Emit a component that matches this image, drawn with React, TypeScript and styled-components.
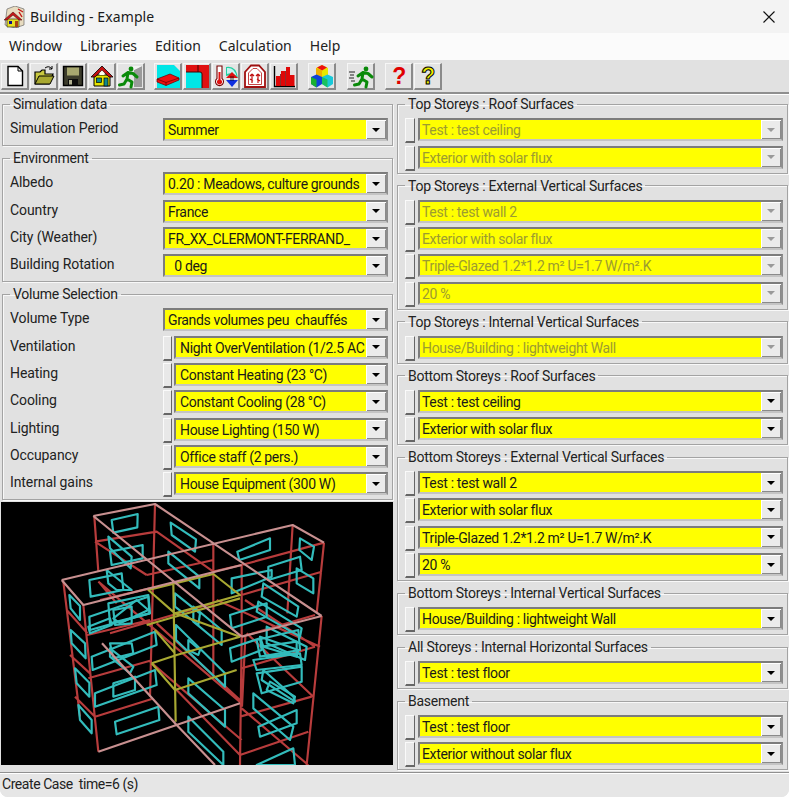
import React from "react";
import styled, { createGlobalStyle } from "styled-components";

const Global = createGlobalStyle`
  html, body { margin: 0; padding: 0; background: #fff; }
  #root { width: 789px; height: 797px; overflow: hidden; }
  * { box-sizing: border-box; }
`;
const Win = styled.div`
  width: 789px; height: 797px; display: flex; flex-direction: column; background: #e1e1e1;
  font-family: Roboto, "Liberation Sans", Arial, sans-serif; color: #111; font-size: 14px; letter-spacing: -0.34px;
  border-radius: 0 0 8px 8px; overflow: hidden;
`;
const TitleBar = styled.div`
  height: 33px; flex: none; background: #f3f3f3; display: flex; align-items: center; padding: 0 14px 0 4px; gap: 5px;
`;
const Title = styled.div`
  flex: 1; font-family: "Noto Sans", sans-serif; font-size: 14px; color: #1a1a1a; letter-spacing: 0.1px;
`;
const MenuBar = styled.div`
  height: 27px; flex: none; background: #fbfbfb; display: flex; align-items: center; padding: 0 0 2px 9px; gap: 18px;
  font-family: "Noto Sans", sans-serif; font-size: 14px; color: #222; letter-spacing: 0;
`;
const Toolbar = styled.div`
  height: 34px; flex: none; display: flex; align-items: flex-start; padding: 3px 0 0 1px;
  border-bottom: 2px solid #8f8f8f; box-shadow: 0 1px 0 #fff;
`;
const ToolGroup = styled.div<{ $left: number }>`
  display: flex; gap: 1px; margin-left: ${(p) => p.$left}px;
`;
const ToolBtn = styled.div`
  width: 28px; height: 27px; display: flex; align-items: center; justify-content: center; background: #e4e4e4;
  border-top: 1px solid #f6f6f6; border-left: 1px solid #f6f6f6; border-right: 2px solid #8a8a8a; border-bottom: 2px solid #8a8a8a;
`;
const Main = styled.div`
  flex: 1; min-height: 0; display: grid; grid-template-columns: 391px 391px; column-gap: 4px; padding: 3.4px 0 0 2px; align-items: start;
`;
const Column = styled.div`
  display: flex; flex-direction: column; gap: 5px;
`;
const Frame = styled.fieldset`
  margin: 0; min-width: 0; padding: 7px 4px 4px 7px; border: 1px solid #a3a3a3;
  box-shadow: inset 1px 1px 0 #f8f8f8, 1px 1px 0 #f8f8f8; display: flex; flex-direction: column; gap: 4.33px;
`;
const Legend = styled.legend`
  padding: 0 3px; height: 14px; line-height: 14px; font-size: 14px; color: #222; letter-spacing: -0.24px;
`;
const Row = styled.div`
  height: 23px; display: flex; align-items: flex-start;
`;
const Label = styled.div`
  flex: 0 0 153px; height: 18px; line-height: 18px; margin-top: 1px; color: #222; letter-spacing: -0.1px;
`;
const Side = styled.div<{ $narrow?: boolean }>`
  flex: 0 0 ${(p) => (p.$narrow ? 9 : 10)}px; height: 25px; margin-right: ${(p) => (p.$narrow ? 2 : 3)}px; background: #e8e8e8;
  border-top: 1px solid #fafafa; border-left: 1px solid #fafafa; border-right: 1px solid #666; border-bottom: 2px solid #666;
`;
const ComboBox = styled.div<{ $off?: boolean }>`
  flex: 1; min-width: 0; height: 23px; display: flex; background: #ffff00;
  border-style: solid; border-width: 2px; border-color: #7c7c7c #8e8e8e #c4c4c4 #7c7c7c;
  color: ${(p) => (p.$off ? "#9c9c30" : "#1a1a1a")};
`;
const ComboText = styled.div<{ $pad: number }>`
  flex: 1; min-width: 0; overflow: hidden; white-space: pre; padding-left: ${(p) => p.$pad}px; line-height: 20.5px; font-size: 14px;
`;
const ArrowBtn = styled.div`
  flex: 0 0 20px; display: flex; align-items: center; justify-content: center; background: #ebebeb;
  box-shadow: inset 1px 1px 0 #fff, inset -1px -1px 0 #8a8a8a;
`;
const Arrow = styled.div<{ $off?: boolean }>`
  width: 0; height: 0; border-left: 4px solid transparent; border-right: 4px solid transparent;
  border-top: 4px solid ${(p) => (p.$off ? "#9a9a9a" : "#000")};
`;
const Scene = styled.svg`
  display: block; width: 392px; height: 263px; margin-left: -1px; margin-top: -3px; background: #000; filter: blur(0.35px);
`;
const StatusBar = styled.div`
  height: 25px; flex: none; margin-top: auto; border-top: 1px solid #909090; box-shadow: inset 0 1px 0 #fff;
  padding: 2px 0 0 2px; line-height: 19px; white-space: pre; color: #222; background: #e6e6e6; letter-spacing: -0.44px;
`;
const CloseIcon = styled.svg`
  flex: none;
`;

const Combo = ({ text, off, side, narrow }: { text: string; off?: boolean; side?: boolean; narrow?: boolean }) => (
  <>
    {side && <Side $narrow={narrow} />}
    <ComboBox $off={off}>
      <ComboText $pad={narrow ? 4 : side ? 2 : 3}>{text}</ComboText>
      <ArrowBtn><Arrow $off={off} /></ArrowBtn>
    </ComboBox>
  </>
);

const Group = ({ title, rows, off }: { title: string; rows: string[]; off?: boolean }) => (
  <Frame>
    <Legend>{title}</Legend>
    {rows.map((r, i) => (
      <Row key={i}><Combo text={r} off={off} side /></Row>
    ))}
  </Frame>
);

const LabeledGroup = ({ title, rows }: { title: string; rows: [string, string, boolean?][] }) => (
  <Frame>
    <Legend>{title}</Legend>
    {rows.map(([l, v, s], i) => (
      <Row key={i}><Label>{l}</Label><Combo text={v} side={!!s} narrow={!!s} /></Row>
    ))}
  </Frame>
);

const I = ({ children }: { children: React.ReactNode }) => (
  <svg width="24" height="24" viewBox="0 0 24 24" overflow="visible">{children}</svg>
);

const Runner = ({ c = "#0a8a0a" }: { c?: string }) => (
  <g fill="none" stroke={c} strokeWidth="3" strokeLinecap="round" strokeLinejoin="round">
    <circle cx="14" cy="4" r="2.4" fill={c} stroke="none" />
    <path d="M6 11L11 7.5L16 8.5L20 12M11 7.5L10 14L15 17L14 22M10 14L7 19L2.5 20" />
  </g>
);

const icons: React.ReactNode[] = [
  <I key="n"><path d="M5 2.5H15L19.5 7V21.5H5Z" fill="#fff" stroke="#000" strokeWidth="1.4" /><path d="M15 2.5V7H19.5" fill="none" stroke="#000" /></I>,
  <I key="o"><path d="M3 8H8L10 6H13V10H21L17 20H3Z" fill="#c8c840" stroke="#000" strokeWidth="1.2" /><path d="M7 12H22L18 20H3Z" fill="#a8a830" stroke="#000" /><path d="M13 4Q17 1 20 5M20 5V2M20 5H17" fill="none" stroke="#000" /></I>,
  <I key="s"><path d="M2.5 2.5H21.5V21.5H2.5Z" fill="#3c3c2c" stroke="#000" strokeWidth="1.4" /><rect x="6" y="3.5" width="12" height="8" fill="#a8a870" /><rect x="7" y="15" width="10" height="6.5" fill="#0c0c0c" /><rect x="8" y="16" width="3" height="4.5" fill="#b0b090" /></I>,
  <I key="h"><path d="M4 11H20V22H4Z" fill="#e6e600" stroke="#000" /><path d="M1 13L12 2L23 13H19L12 6.5L5 13Z" fill="#c41010" stroke="#000" strokeWidth="0.8" /><path d="M9.5 9L12 6.5L14.5 9V11H9.5Z" fill="#ffe" /><rect x="6.5" y="14" width="5" height="4.5" fill="#108a8a" stroke="#000" strokeWidth="0.7" /><rect x="14" y="14" width="4" height="8" fill="#108a8a" stroke="#000" strokeWidth="0.7" /></I>,
  <I key="e"><path d="M15 6L23 2V23H15Z" fill="#9a9a9a" /><path d="M15 6L23 2H14Z" fill="#f4f4f4" /><circle cx="18" cy="13" r="0.8" fill="#222" /><g transform="translate(-2 1)"><Runner /></g></I>,
  <I key="w"><path d="M1 1H18L24 7V24H1Z" fill="#00e6e6" /><path d="M1 15L14 10L23 14V16L10 21.5L1 18Z" fill="#ee1010" stroke="#600" strokeWidth="0.7" /><path d="M1 15L10 18.5L23 14M10 18.5V21.5" fill="none" stroke="#600" strokeWidth="0.7" /></I>,
  <I key="c"><rect x="1" y="1" width="23" height="23" fill="#00e6e6" /><path d="M1 1H24V24H17V10Q17 8 15 8H1Z" fill="#e01010" /><path d="M13 1V8" stroke="#400" strokeWidth="1" /><path d="M1 8H15Q17 8 17 10V24" fill="none" stroke="#400" /></I>,
  <I key="t"><path d="M12 3Q22 1 24 14Q20 10 12 12Z" fill="#20d0a0" /><path d="M13 4Q20 3 22.5 12Q18 8 13 10Z" fill="#c8f0f0" /><path d="M3 2H8V14.5A4 4 0 1 1 3 14.5Z" fill="#fff" stroke="#700" strokeWidth="1.1" /><path d="M4.5 8H6.5V15.5A2.6 2.6 0 1 1 4.5 15.5Z" fill="#e01010" /><path d="M12 14L18 8L24 14Z" fill="#e01010" /><path d="M12 16L18 23L24 16Z" fill="#1030e0" /><path d="M16 12H20V17H16Z" fill="#000" opacity="0.35" /></I>,
  <I key="r"><path d="M2 8L8 1.5H16L22 8V23H2Z" fill="#fff" stroke="#a01010" strokeWidth="1.8" /><path d="M5.5 9L10 4.5H14L18.5 9V20.5H5.5Z" fill="none" stroke="#c03030" strokeWidth="0.9" /><path d="M9 19V10M9 10L7 12M9 10L11 12M15 19V10M15 10L13 12M15 10L17 12M7 15L10 17M14 15L17 17" fill="none" stroke="#c01010" strokeWidth="1.2" /></I>,
  <I key="b"><path d="M2.5 2V22.5H23" fill="none" stroke="#000" strokeWidth="1.4" /><path d="M4 12H8V22H4ZM9 7H13V22H9ZM14 3H18V22H14ZM18 11H22.5V22H18Z" fill="#e00808" /><path d="M8.5 10V22M13.5 7V22" stroke="#700" strokeWidth="0.8" /></I>,
  <I key="q"><path d="M12 1L18 4V11L12 14L6 11V4Z" fill="#e8e800" /><path d="M7 3.5L12 1L17 3.5L12 6.5Z" fill="#ee1010" /><path d="M12 6.5V14L6 11V4Z" fill="#f0b000" /><path d="M1 13L6.5 10.5L12 13V20L6.5 23.5L1 20Z" fill="#1040d8" /><path d="M1 13L6.5 15.5V23.5L1 20Z" fill="#18b030" /><path d="M12 13L17.5 10.5L23 13V20L17.5 23.5L12 20Z" fill="#18c8d8" /><path d="M12 13L17.5 15.5V23.5L12 20Z" fill="#18c060" /></I>,
  <I key="f"><path d="M0 8H6M1 11H5M0 14H5M2 17H6" stroke="#222" strokeWidth="1" /><g transform="translate(3 1)"><Runner /></g></I>,
  <I key="h1"><text x="12" y="20" textAnchor="middle" fontFamily="Liberation Sans" fontWeight="700" fontSize="23" fill="#e00000">?</text></I>,
  <I key="h2"><text x="12" y="20" textAnchor="middle" fontFamily="Liberation Sans" fontWeight="700" fontSize="23" fill="#f0f000" stroke="#000" strokeWidth="1">?</text></I>,
];

const pink = "M280,48L465,12L965,348M280,48L725,410M185,240L878,75L972,128M185,240L250,315L725,195M725,410L965,348M295,755L720,610M306,430L530,675L645,795";
const red = [
  "M283,50L295,215M465,12L450,590M640,130L640,530M878,75L862,340M972,128L950,340M965,348L920,795M725,410L720,795M736,410L726,620M725,195L725,420",
  "M250,315L295,755M190,245L240,650M200,330L262,400M210,465L270,520M225,590L285,650",
  "M285,125L470,95L640,215M285,125L440,225M295,245L725,610M470,370L720,600M450,485L725,720M530,570L720,765M725,625L925,795",
  "M262,405L450,360M265,535L450,482M285,650L455,597M725,505L945,440M640,215L725,195M725,195L972,128M725,285L965,215M725,410L945,345",
  "M720,650L935,590M720,765L925,695M440,225L640,180M300,300L450,265M330,400L640,310M300,250L350,310M650,300L960,440M735,300L945,440M740,400L940,590",
].join("");
const olive = "M445,270L640,222L720,285L525,340ZM440,375L525,350L720,295M455,490L525,570L710,510M455,490L530,465L720,410M520,255L527,665M465,390L525,460M525,340L720,410";
const cyan = [
  [335,60,413,42,412,82,340,98],[512,68,588,118,585,155,515,105],[325,110,395,170,392,205,330,145],[330,155,428,135,428,175,335,195],
  [505,155,598,230,598,265,505,190],[712,155,810,115,810,150,718,180],[900,115,942,140,935,180,898,150],[268,240,365,220,370,270,272,290],
  [208,285,240,318,240,360,212,325],[212,390,255,430,257,475,215,430],[225,505,268,548,268,590,230,550],[235,615,275,660,275,700,240,660],
  [345,665,475,620,478,660,350,703],[268,350,445,290,448,340,270,390],[275,470,465,395,470,435,278,510],[285,580,465,510,470,555,285,620],
  [325,310,445,285,450,340,330,370],[340,330,395,320,395,370,345,375],[330,430,395,430,400,460,340,475],[340,550,405,530,405,570,340,590],
  [320,210,395,270,350,270,325,250],[565,535,675,630,675,680,565,580],[565,650,670,755,670,795,565,695],[525,280,600,340,595,375,525,320],
  [580,320,665,390,665,435,580,365],[528,375,675,520,675,560,528,420],[565,420,600,450,595,465,565,450],[695,235,815,210,815,230,695,280],
  [805,200,900,170,905,210,805,240],[790,250,895,320,890,350,785,290],[890,205,940,235,940,280,890,250],[690,345,800,310,800,350,695,385],
  [690,445,780,415,785,450,695,485],[770,420,895,390,900,450,780,470],[780,410,895,450,890,470,790,440],[760,480,900,460,905,495,770,510],
  [770,520,905,500,905,545,785,580],[760,580,880,680,870,720,760,625],[775,680,890,630,890,670,780,710],[770,795,880,745,885,795,770,795],
  [775,305,905,385,900,410,770,335],[790,510,880,590,885,605,785,540],[800,380,920,440,915,480,800,430],[340,355,410,300,445,330,360,370],[265,380,330,355,335,375,270,400],
  [330,445,400,500,390,520,330,470],[785,440,890,425,890,460,800,470],[810,545,885,590,880,610,800,570],
];

const volumeRows: [string, string, boolean?][] = [
  ["Volume Type", "Grands volumes peu  chauffés"],
  ["Ventilation", "Night OverVentilation (1/2.5 AC", true],
  ["Heating", "Constant Heating (23 °C)", true],
  ["Cooling", "Constant Cooling (28 °C)", true],
  ["Lighting", "House Lighting (150 W)", true],
  ["Occupancy", "Office staff (2 pers.)", true],
  ["Internal gains", "House Equipment (300 W)", true],
];

const groupSplits: [number, number][] = [[0, 5], [5, 10], [10, 11], [11, 12], [12, 14]];

export default function App() {
  return (
    <Win>
      <Global />
      <TitleBar>
        <svg width="21" height="22" viewBox="0 0 21 22">
          <path d="M3 3L11 0L20 3V19L11 22L1 19Z" fill="#e8dcc0" stroke="#555" strokeWidth="0.6" />
          <path d="M3 13H15V21H3Z" fill="#e6e020" stroke="#333" strokeWidth="0.7" />
          <path d="M0 14L9 6L18 14H15L9 9L3 14Z" fill="#c41818" stroke="#511" strokeWidth="0.6" />
          <rect x="5" y="15" width="3" height="3" fill="#118" /><rect x="11" y="15" width="3" height="6" fill="#a41" />
          <path d="M14 3L19 6M15 6L18 11" stroke="#c41818" strokeWidth="1.4" />
        </svg>
        <Title>Building - Example</Title>
        <CloseIcon width="12" height="12" viewBox="0 0 12 12"><path d="M0.5 0.5L11.5 11.5M11.5 0.5L0.5 11.5" stroke="#111" strokeWidth="1.1" /></CloseIcon>
      </TitleBar>
      <MenuBar>
        {["Window", "Libraries", "Edition", "Calculation", "Help"].map((m) => <span key={m}>{m}</span>)}
      </MenuBar>
      <Toolbar>
        {groupSplits.map(([a, b], i) => (
          <ToolGroup key={i} $left={[0, 9, 10, 11, 10][i]}>
            {icons.slice(a, b).map((ic, j) => <ToolBtn key={j}>{ic}</ToolBtn>)}
          </ToolGroup>
        ))}
      </Toolbar>
      <Main>
        <Column>
          <LabeledGroup title="Simulation data" rows={[["Simulation Period", "Summer"]]} />
          <LabeledGroup title="Environment" rows={[
            ["Albedo", "0.20 : Meadows, culture grounds"],
            ["Country", "France"],
            ["City (Weather)", "FR_XX_CLERMONT-FERRAND_"],
            ["Building Rotation", "  0 deg"],
          ]} />
          <LabeledGroup title="Volume Selection" rows={volumeRows} />
          <Scene viewBox="3 6 1176 789" preserveAspectRatio="none" fill="none" strokeWidth="6.5" strokeLinejoin="round">
            <path d={red} stroke="#b83c3c" />
            {cyan.map((c, i) => (
              <polygon key={i} points={c.join(" ")} stroke="#33bcbc" />
            ))}
            <path d={olive} stroke="#a8a832" />
            <path d={pink} stroke="#c89090" />
          </Scene>
        </Column>
        <Column>
          <Group title="Top Storeys : Roof Surfaces" off rows={["Test : test ceiling", "Exterior with solar flux"]} />
          <Group title="Top Storeys : External Vertical Surfaces" off rows={["Test : test wall 2", "Exterior with solar flux", "Triple-Glazed 1.2*1.2 m² U=1.7 W/m².K", "20 %"]} />
          <Group title="Top Storeys : Internal Vertical Surfaces" off rows={["House/Building : lightweight Wall"]} />
          <Group title="Bottom Storeys : Roof Surfaces" rows={["Test : test ceiling", "Exterior with solar flux"]} />
          <Group title="Bottom Storeys : External Vertical Surfaces" rows={["Test : test wall 2", "Exterior with solar flux", "Triple-Glazed 1.2*1.2 m² U=1.7 W/m².K", "20 %"]} />
          <Group title="Bottom Storeys : Internal Vertical Surfaces" rows={["House/Building : lightweight Wall"]} />
          <Group title="All Storeys : Internal Horizontal Surfaces" rows={["Test : test floor"]} />
          <Group title="Basement" rows={["Test : test floor", "Exterior without solar flux"]} />
        </Column>
      </Main>
      <StatusBar>Create Case  time=6 (s)</StatusBar>
    </Win>
  );
}
